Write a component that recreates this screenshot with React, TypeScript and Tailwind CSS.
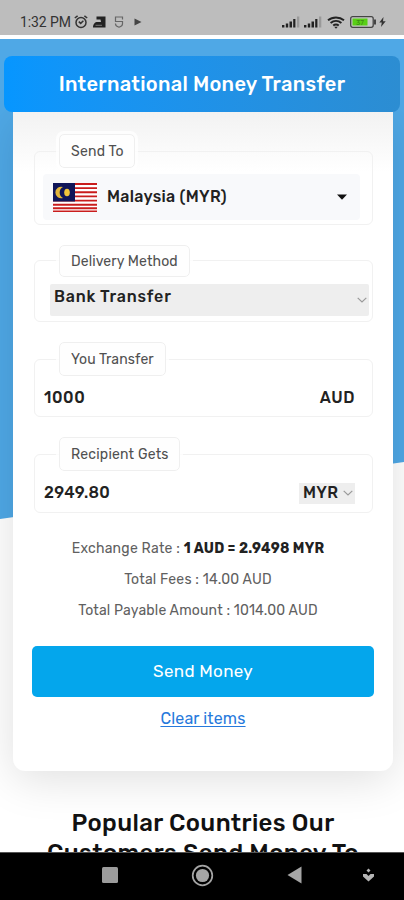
import type { ReactNode } from "react";

export default function App() {
  return (
    <div className="flex h-[900px] w-full flex-col overflow-hidden bg-white font-['Rubik','Roboto',sans-serif] text-[#222]">
      <StatusBar />
      <main className="relative flex-1 overflow-hidden">
        <div className="absolute inset-x-0 top-0 h-[480px] bg-[#4fa8e6] [clip-path:polygon(0_0,100%_0,100%_423px,0_480px)]" />
        <div className="relative flex flex-col px-1 pt-[17px]">
          <h1 className="z-10 h-14 rounded-lg bg-linear-to-r from-[#0696ff] to-[#2c8dd2] text-center text-[20px] leading-[56px] font-medium tracking-[0.3px] whitespace-nowrap text-white">
            International Money Transfer
          </h1>
          <TransferCard />
          <h2 className="pt-[37px] pl-[2px] text-center text-[24px] leading-[30px] font-medium tracking-[0.37px] text-[#111]">
            Popular Countries Our
            <br />
            Customers Send Money To
          </h2>
        </div>
      </main>
      <NavBar />
    </div>
  );
}

function TransferCard() {
  return (
    <section className="mr-[7px] ml-[9px] flex h-[659px] flex-col rounded-b-xl bg-white bg-linear-to-b from-[#f2f2f2] to-white to-[60px] px-[19px] pt-[22px] shadow-[0_8px_45px_rgba(0,0,0,0.13)]">
      <form className="flex flex-col gap-5 pr-px pl-0.5">
        <Field label="Send To" className="h-[91px]" labelClass="h-[34px] w-[76px] tracking-[0.2px]">
          <div className="mt-[22px] mr-3 ml-2 flex h-[46px] items-center rounded bg-[#f8f9fb] pr-[13px] pl-[10px]">
            <Flag />
            <span className="ml-[10px] flex-1 text-[16px] font-medium tracking-[0.3px]">
              Malaysia (MYR)
            </span>
            <svg width="10" height="6" viewBox="0 0 10 6">
              <path d="M0 .5h10L5 5.7z" fill="#111" />
            </svg>
          </div>
        </Field>
        <Field label="Delivery Method" className="h-[77px]" labelClass="h-8 w-[131px] tracking-[0.12px]">
          <div className="mt-[23px] mr-[3px] ml-[15px] flex h-8 items-center justify-between rounded-xs bg-[#eee] pr-[2px] pl-1">
            <span className="-mt-[7px] text-[16px] font-medium tracking-[0.8px]">
              Bank Transfer
            </span>
            <Chevron />
          </div>
        </Field>
        <Field label="You Transfer" className="h-[75px]" labelClass="h-[34px] w-[107px] tracking-[0.12px]">
          <div className="mt-[26px] mr-[17px] ml-[9px] flex h-6 items-center justify-between text-[16px] font-medium tracking-[0.6px]">
            <span>1000</span>
            <span>AUD</span>
          </div>
        </Field>
        <Field label="Recipient Gets" className="h-[76px]" labelClass="h-[34px] w-[121px] tracking-[0.2px]">
          <div className="mt-[27px] mr-[17px] ml-[9px] flex h-[22px] items-center justify-between text-[16px] font-medium tracking-[0.3px]">
            <span>2949.80</span>
            <span className="flex h-[21px] w-14 items-center justify-between bg-[#eee] pr-[2px] pl-1">
              MYR
              <Chevron />
            </span>
          </div>
        </Field>
      </form>
      <div className="mt-5 pr-[10px] text-center text-[14px] leading-[31px] whitespace-nowrap text-[#606060]">
        <p className="tracking-[0.22px]">
          Exchange Rate : <b className="font-bold text-[#222]">1 AUD = 2.9498 MYR</b>
        </p>
        <p className="tracking-[0.2px]">Total Fees : 14.00 AUD</p>
        <p className="tracking-[0.17px]">Total Payable Amount : 1014.00 AUD</p>
      </div>
      <button className="mt-5 h-[51px] rounded-[5px] bg-[#04a6ec] text-[17px] tracking-[0.3px] text-white">
        Send Money
      </button>
      <a className="mt-[10px] text-center text-[16px] leading-6 tracking-[0.15px] text-[#2679dc] underline underline-offset-2">
        Clear items
      </a>
    </section>
  );
}

type FieldProps = {
  label: string;
  className: string;
  labelClass: string;
  children: ReactNode;
};

function Field({ label, className, labelClass, children }: FieldProps) {
  return (
    <div className={"flex flex-col " + className}>
      <span
        className={
          "z-10 ml-[25px] flex shrink-0 items-center self-start rounded-[5px] border border-[#efefef] bg-[#fefefe] pl-[11px] text-[14px] whitespace-nowrap text-[#505050] outline-3 outline-white/80 " +
          labelClass
        }
      >
        {label}
      </span>
      <div className="-mt-[17px] flex flex-1 flex-col rounded-md border border-[#f1f1f1]">
        {children}
      </div>
    </div>
  );
}

function Chevron() {
  return (
    <svg width="10" height="6" viewBox="0 0 10 6" fill="none" stroke="#999" strokeWidth="1.2">
      <path d="M.7.9 5 4.9 9.3.9" />
    </svg>
  );
}

function Flag() {
  return (
    <svg width="44" height="29" viewBox="0 0 44 29">
      <path d="M0 0h44v29H0z" fill="#fff" />
      <path
        d="M0 1h44M0 5.15h44M0 9.3h44M0 13.4h44M0 17.6h44M0 21.7h44M0 25.3h44M0 28.4h44"
        stroke="#c91c1c"
        strokeWidth="1.9"
      />
      <path d="M0 0h22v18.5H0z" fill="#101659" />
      <path d="M10 4a5.8 5.8 0 1 0 0 11 6.200 6.200 0 0 1 0-11z" fill="#e2b63c" />
      <ellipse cx="14" cy="9.500" rx="2.800" ry="3.800" fill="#f0c43a" />
    </svg>
  );
}

function Signal() {
  return (
    <svg width="18" height="12" viewBox="0 0 18 12">
      <path d="M0 9h2.4v2.5H0zM3.8 7.5h2.4v4H3.8zM7.5 5.5H10v6H7.5zM11.2 3h2.2v8.5h-2.2z" fill="#222" />
      <path d="M15 .5h2.3v11H15z" fill="#999" />
    </svg>
  );
}

function StatusBar() {
  return (
    <header className="mb-1 flex h-[35px] items-center justify-between bg-[#bdbdbd] pt-[9px] pr-[18px] pl-5 text-[#333]">
      <div className="flex items-center">
        <span className="font-['Roboto',sans-serif] text-[14px] leading-5 tracking-[-0.1px] whitespace-nowrap">
          1:32 PM
        </span>
        <svg className="ml-[3px]" width="14" height="14" viewBox="0 0 14 14" fill="none" stroke="#333" strokeWidth="1.5">
          <circle cx="7" cy="7.5" r="5" />
          <path d="M.8 3 3.6.8M13.2 3 10.4.8M4.8 6.6l1.9 1.8 2.7-2.6" />
        </svg>
        <svg className="ml-[5px]" width="13" height="12" viewBox="0 0 13 12">
          <path d="M3.500.5H12.500V11.500H0C0 8 2 6 4.500 6H8L7.500 3.500H3.500z" fill="#222" />
          <path d="M2.500 9.300h6.500" stroke="#777" />
        </svg>
        <svg className="ml-2" width="10" height="12" viewBox="0 0 10 12" fill="none" stroke="#666" strokeWidth="1.2">
          <path d="M8.500 3.500V1h-7v4.500h7V8c0 1.500-1.500 2.500-3.500 3.200C3 10.500 1.500 9.500 1.500 8V7.500" />
        </svg>
        <svg className="ml-[10px]" width="8" height="8" viewBox="0 0 8 8">
          <path d="M.5.5 7.500 4 .5 7.500z" fill="#444" />
        </svg>
      </div>
      <div className="flex items-center">
        <Signal />
        <span className="w-1" />
        <Signal />
        <svg className="ml-[5px]" width="18" height="13" viewBox="0 0 18 13" fill="none" stroke="#222" strokeWidth="1.9">
          <path d="M1 4.300C5.500.500 12.500.500 17 4.300M3.600 7c3.200-2.700 7.600-2.700 10.800 0M6.200 9.500c1.700-1.300 3.900-1.300 5.600 0" />
          <path d="m7.200 10.800 1.800 2 1.800-2z" fill="#222" stroke="none" />
        </svg>
        <svg className="ml-[5px]" width="27" height="12" viewBox="0 0 27 12">
          <rect x=".7" y=".7" width="22.500" height="10.600" rx="2" fill="#c9c9c9" stroke="#444" strokeWidth="1.300" />
          <rect x="2.500" y="2.500" width="15" height="7" fill="#59cf16" />
          <path d="M24 3.500h2v5h-2z" fill="#444" />
          <text x="10" y="8.700" fontSize="7" textAnchor="middle" fill="#3b8a15">37</text>
        </svg>
        <svg className="ml-[2px]" width="7" height="12" viewBox="0 0 7 12">
          <path d="M4.500 1 .3 6.500h2.500L2 11l4.700-5.800H4z" fill="#333" />
        </svg>
      </div>
    </header>
  );
}

function NavBar() {
  return (
    <nav className="flex h-12 shrink-0 items-center border-t border-[#555] bg-black pr-[29px] pb-[3px] pl-[102px]">
      <svg width="16" height="16" viewBox="0 0 16 16">
        <rect width="16" height="16" rx="1.500" fill="#9c9c9c" />
      </svg>
      <svg className="ml-[73px]" width="23" height="23" viewBox="0 0 23 23">
        <circle cx="11.500" cy="11.500" r="9.800" fill="none" stroke="#a5a5a5" strokeWidth="1.700" />
        <circle cx="11.500" cy="11.500" r="6.600" fill="#a5a5a5" />
      </svg>
      <svg className="ml-[73px]" width="15" height="18" viewBox="0 0 15 18">
        <path d="M.5 9 14.500.5v17z" fill="#a5a5a5" />
      </svg>
      <svg className="ml-auto" width="13" height="15" viewBox="0 0 13 15">
        <path d="M6.500.5 8.500 2.500 6.500 4.500 4.500 2.500z" fill="#b5b5b5" />
        <path d="M1 6h3.500L6.500 8l2-2H12v2.500L6.500 13.500 1 8.500z" fill="#b5b5b5" />
      </svg>
    </nav>
  );
}
